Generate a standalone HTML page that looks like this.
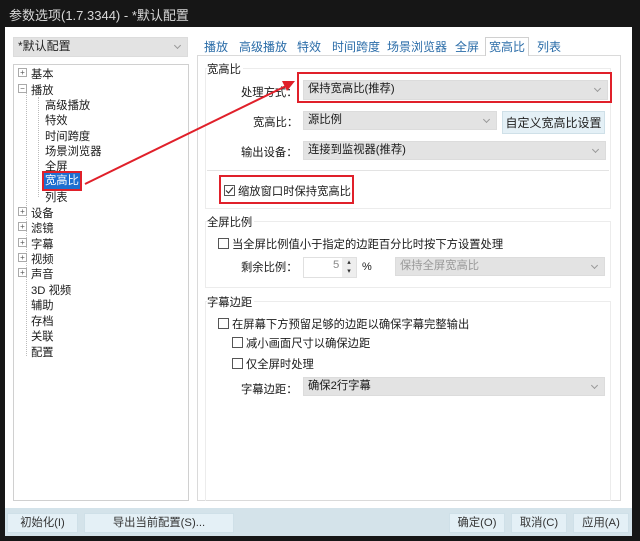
<!DOCTYPE html>
<html><head><meta charset="utf-8"><style>
*{margin:0;padding:0;box-sizing:border-box}
body{width:640px;height:541px;background:#161616;position:relative;overflow:hidden;font-family:"Liberation Sans","Noto Sans CJK SC",sans-serif;font-size:11.3px;color:#1a1a1a}
.a{position:absolute;white-space:nowrap}
.title{left:9px;top:5px;color:#d8d8d8;font-size:13px}
.win{left:5px;top:27px;width:627px;height:509px;background:#fff}
.combo{position:absolute;background:#e3e3e3;border:1px solid #dcdcdc;padding-left:4px;line-height:17px;font-size:11.3px}
.combo::after{content:"";position:absolute;right:7px;top:5px;width:4px;height:4px;border-right:1px solid #999;border-bottom:1px solid #999;transform:rotate(45deg)}
.box{position:absolute;border:1px solid #e2e2e2}
.cb{display:inline-block;width:11px;height:11px;border:1px solid #555;vertical-align:-1px;margin-right:3px;background:#fff;position:relative}
.red{position:absolute;border:2px solid #e0202a}
.btn{position:absolute;background:#e4f0f6;border:1px solid #cfe0e8;text-align:center;line-height:18px;color:#333;font-size:11.3px}
.tab{position:absolute;top:38px;color:#2a6ca8;font-size:12px}
.t{position:absolute;font-size:11.3px;white-space:nowrap}
.lb{background:#fff;padding-right:2px}
.pm{position:absolute;width:9px;height:9px;border:1px solid #aaa;font-size:8px;line-height:7px;text-align:center;color:#555;background:#fff}
</style></head><body>
<div class="a title">参数选项(1.7.3344) - *默认配置</div>
<div class="a win"></div>
<div class="combo" style="left:13px;top:37px;width:175px;height:20px;color:#222;font-size:12px">*默认配置</div>
<div class="box" style="left:13px;top:64px;width:176px;height:437px;border-color:#d0d0d0"></div>
<div class="a" style="left:26px;top:86px;width:1px;height:270px;border-left:1px dotted #bbb"></div>
<div class="a" style="left:38px;top:97px;width:1px;height:100px;border-left:1px dotted #bbb"></div>
<div class="pm" style="left:18px;top:68px">+</div>
<div class="pm" style="left:18px;top:84px">−</div>
<div class="pm" style="left:18px;top:207px">+</div>
<div class="pm" style="left:18px;top:222px">+</div>
<div class="pm" style="left:18px;top:238px">+</div>
<div class="pm" style="left:18px;top:253px">+</div>
<div class="pm" style="left:18px;top:268px">+</div>
<div class="t" style="left:31px;top:66px">基本</div>
<div class="t" style="left:31px;top:82px">播放</div>
<div class="t" style="left:45px;top:97px">高级播放</div>
<div class="t" style="left:45px;top:112px">特效</div>
<div class="t" style="left:45px;top:128px">时间跨度</div>
<div class="t" style="left:45px;top:143px">场景浏览器</div>
<div class="t" style="left:45px;top:158px">全屏</div>
<div class="t" style="left:44px;top:173px;background:#1e6fd0;color:#fff;padding:0 1px;outline:2px solid #e0202a;line-height:16px">宽高比</div>
<div class="t" style="left:45px;top:189px">列表</div>
<div class="t" style="left:31px;top:205px">设备</div>
<div class="t" style="left:31px;top:220px">滤镜</div>
<div class="t" style="left:31px;top:236px">字幕</div>
<div class="t" style="left:31px;top:251px">视频</div>
<div class="t" style="left:31px;top:266px">声音</div>
<div class="t" style="left:31px;top:282px">3D 视频</div>
<div class="t" style="left:31px;top:297px">辅助</div>
<div class="t" style="left:31px;top:313px">存档</div>
<div class="t" style="left:31px;top:328px">关联</div>
<div class="t" style="left:31px;top:344px">配置</div>

<div class="box" style="left:197px;top:55px;width:424px;height:446px;border-color:#dadada"></div>
<div class="tab" style="left:204px">播放</div>
<div class="tab" style="left:239px">高级播放</div>
<div class="tab" style="left:297px">特效</div>
<div class="tab" style="left:332px">时间跨度</div>
<div class="tab" style="left:387px">场景浏览器</div>
<div class="tab" style="left:455px">全屏</div>
<div class="a" style="left:485px;top:37px;width:44px;height:19px;background:#fff;border:1px solid #d0d0d0;border-bottom:none"></div>
<div class="tab" style="left:489px;color:#2a6ca8">宽高比</div>
<div class="tab" style="left:537px">列表</div>

<div class="box" style="left:205px;top:68px;width:406px;height:141px;border-color:#ececec"></div>
<div class="t lb" style="left:207px;top:61px">宽高比</div>
<div class="t" style="left:241px;top:84px">处理方式：</div>
<div class="combo" style="left:303px;top:80px;width:305px;height:20px">保持宽高比(推荐)</div>
<div class="red" style="left:297px;top:72px;width:315px;height:31px"></div>
<div class="t" style="left:253px;top:114px">宽高比：</div>
<div class="combo" style="left:303px;top:111px;width:194px;height:19px">源比例</div>
<div class="btn" style="left:502px;top:111px;width:103px;height:23px;line-height:22px;font-size:12px;color:#222">自定义宽高比设置</div>
<div class="t" style="left:241px;top:144px">输出设备：</div>
<div class="combo" style="left:303px;top:141px;width:303px;height:19px">连接到监视器(推荐)</div>
<div class="a" style="left:207px;top:170px;width:402px;height:1px;background:#e3e3e3"></div>
<div class="t" style="left:224px;top:183px"><span class="cb" style="border-color:#555">
<svg width="9" height="9" style="position:absolute;left:0;top:0"><path d="M1 4.5L3.5 7L8 1.5" stroke="#333" fill="none" stroke-width="1.2"/></svg></span>缩放窗口时保持宽高比</div>
<div class="red" style="left:219px;top:175px;width:135px;height:29px"></div>

<div class="box" style="left:205px;top:221px;width:406px;height:67px;border-color:#ececec"></div>
<div class="t lb" style="left:207px;top:214px">全屏比例</div>
<div class="t" style="left:218px;top:236px"><span class="cb"></span>当全屏比例值小于指定的边距百分比时按下方设置处理</div>
<div class="t" style="left:241px;top:259px">剩余比例：</div>
<div class="a" style="left:303px;top:257px;width:54px;height:21px;border:1px solid #e0e0e0;background:#fff"></div>
<div class="t" style="left:333px;top:259px;color:#888">5</div>
<div class="a" style="left:342px;top:258px;width:14px;height:19px;background:#eee;font-size:7px;text-align:center;line-height:9px;color:#333">▴<br>▾</div>
<div class="t" style="left:362px;top:261px;font-size:11px">%</div>
<div class="combo" style="left:395px;top:257px;width:210px;height:19px;color:#999">保持全屏宽高比</div>

<div class="box" style="left:205px;top:301px;width:406px;height:200px;border-color:#ececec;border-bottom:none"></div>
<div class="t lb" style="left:207px;top:294px">字幕边距</div>
<div class="t" style="left:218px;top:316px"><span class="cb"></span>在屏幕下方预留足够的边距以确保字幕完整输出</div>
<div class="t" style="left:232px;top:335px"><span class="cb"></span>减小画面尺寸以确保边距</div>
<div class="t" style="left:232px;top:356px"><span class="cb"></span>仅全屏时处理</div>
<div class="t" style="left:241px;top:381px">字幕边距：</div>
<div class="combo" style="left:303px;top:377px;width:302px;height:19px">确保2行字幕</div>

<svg class="a" style="left:0;top:0" width="640" height="541"><line x1="85" y1="184" x2="286" y2="86" stroke="#e0202a" stroke-width="2"/><path d="M295 81L282 81L287 91Z" fill="#e0202a"/></svg>

<div class="a" style="left:5px;top:508px;width:627px;height:28px;background:#d4e3ea"></div>
<div class="btn" style="left:7px;top:513px;width:71px;height:20px">初始化(I)</div>
<div class="btn" style="left:84px;top:513px;width:150px;height:20px">导出当前配置(S)...</div>
<div class="btn" style="left:449px;top:513px;width:56px;height:20px">确定(O)</div>
<div class="btn" style="left:511px;top:513px;width:56px;height:20px">取消(C)</div>
<div class="btn" style="left:573px;top:513px;width:56px;height:20px">应用(A)</div>
</body></html>
